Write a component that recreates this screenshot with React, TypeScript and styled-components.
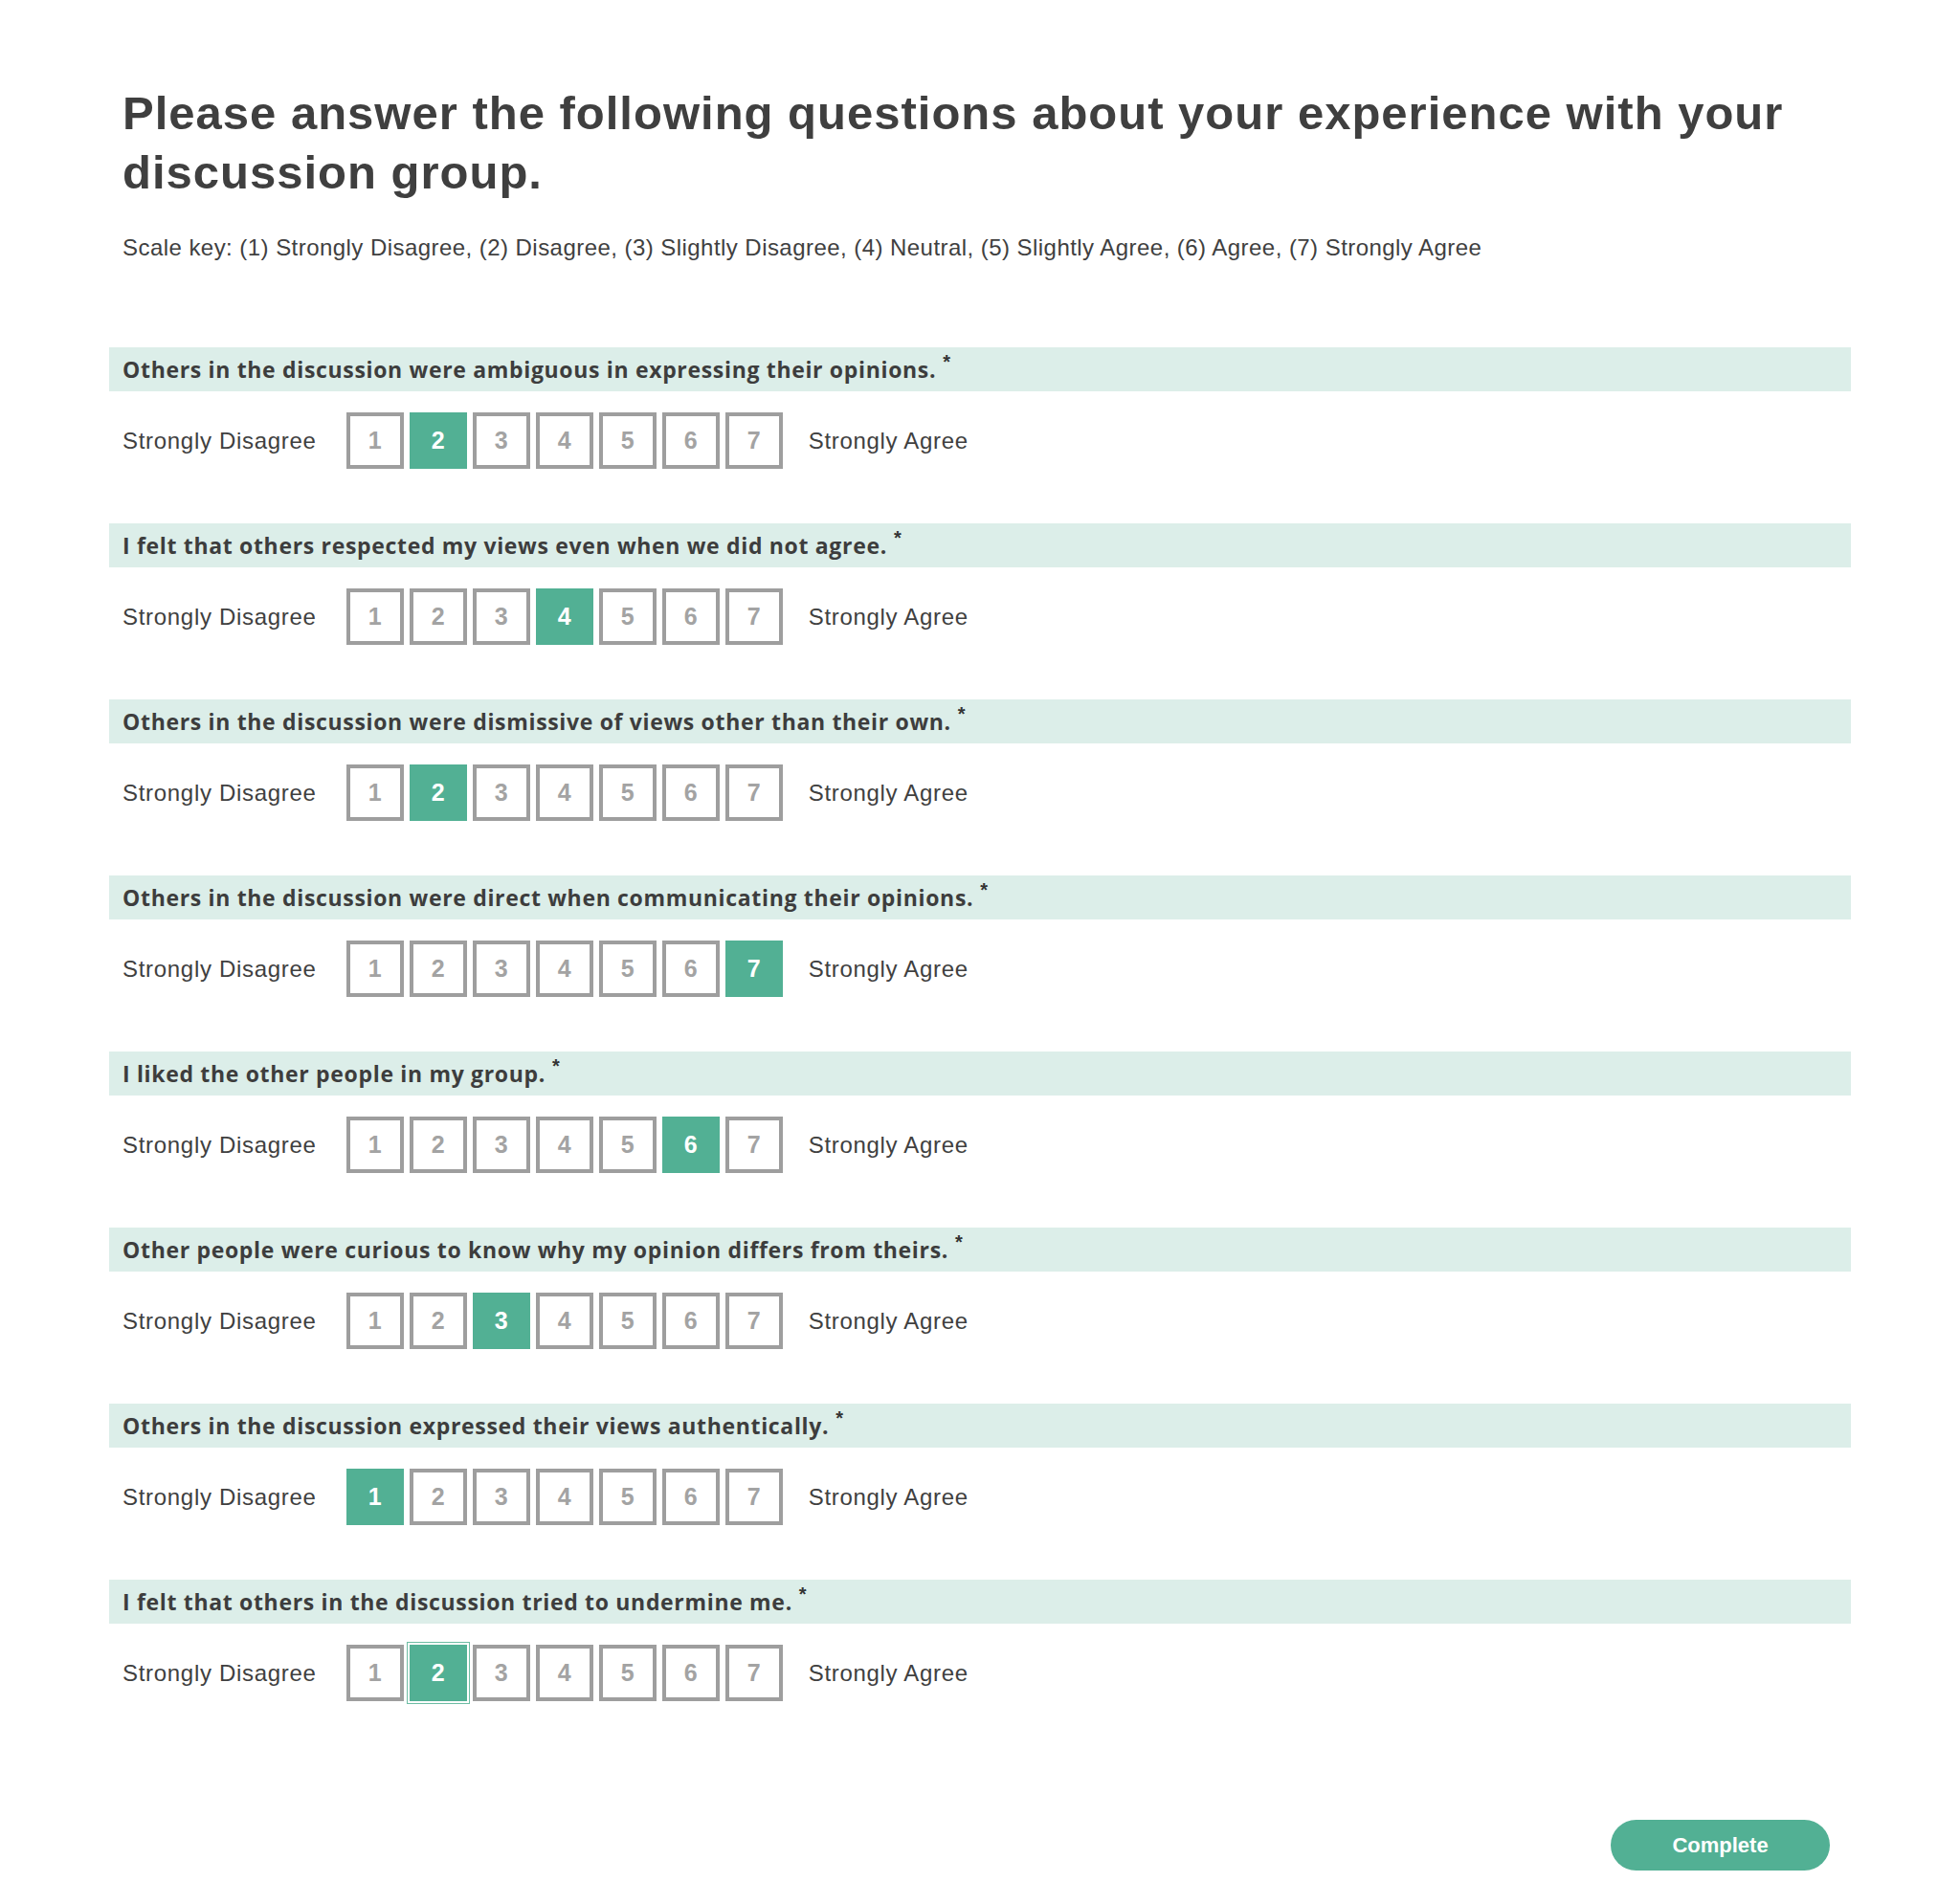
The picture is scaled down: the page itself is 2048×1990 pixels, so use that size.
import React, {FC, useState} from 'react';
import styled, {createGlobalStyle} from "styled-components";

interface IQuestion {
    text: string
    value: number
}

const questions: IQuestion[] = [
    {text: 'Others in the discussion were ambiguous in expressing their opinions.', value: 2},
    {text: 'I felt that others respected my views even when we did not agree.', value: 4},
    {text: 'Others in the discussion were dismissive of views other than their own.', value: 2},
    {text: 'Others in the discussion were direct when communicating their opinions.', value: 7},
    {text: 'I liked the other people in my group.', value: 6},
    {text: 'Other people were curious to know why my opinion differs from theirs.', value: 3},
    {text: 'Others in the discussion expressed their views authentically.', value: 1},
    {text: 'I felt that others in the discussion tried to undermine me.', value: 2},
]

const scale = [1, 2, 3, 4, 5, 6, 7]

const App: FC = () => {

    const [answers, setAnswers] = useState<number[]>(questions.map(q => q.value))
    const focused = questions.length - 1

    const choose = (qi: number, v: number) => {
        setAnswers(prev => prev.map((a, i) => i === qi ? v : a))
    }

    return (
        <>
            <GlobalStyle/>
            <Page>
                <Title>Please answer the following questions about your experience with your discussion group.</Title>
                <ScaleKey>
                    Scale key: (1) Strongly Disagree, (2) Disagree, (3) Slightly Disagree, (4) Neutral, (5) Slightly
                    Agree, (6) Agree, (7) Strongly Agree
                </ScaleKey>
                <Questions>
                    {questions.map((q, qi) => (
                        <Question key={qi}>
                            <QuestionHeader>
                                {q.text}
                                <Required>*</Required>
                            </QuestionHeader>
                            <RatingRow>
                                <EndLabel>Strongly Disagree</EndLabel>
                                <Boxes>
                                    {scale.map(v => (
                                        <Box
                                            key={v}
                                            $selected={answers[qi] === v}
                                            $focused={qi === focused && answers[qi] === v}
                                            onClick={() => choose(qi, v)}
                                        >
                                            {v}
                                        </Box>
                                    ))}
                                </Boxes>
                                <EndLabel $right>Strongly Agree</EndLabel>
                            </RatingRow>
                        </Question>
                    ))}
                </Questions>
                <Footer>
                    <CompleteButton>Complete</CompleteButton>
                </Footer>
            </Page>
        </>
    );
};

const GlobalStyle = createGlobalStyle`
  body {
    margin: 0;
    background: #fff;
    color: #404040;
    font-family: "Liberation Sans", Arial, Helvetica, sans-serif;
  }
`

const Page = styled.div`
  width: 1820px;
  margin: 0 auto;
  padding-top: 87px;
  display: flex;
  flex-direction: column;
`

const Title = styled.h1`
  margin: 0;
  padding: 0 14px;
  font-size: 49px;
  line-height: 62px;
  letter-spacing: 1px;
  font-weight: 700;
  color: #3f3f3f;
`

const ScaleKey = styled.p`
  margin: 32px 0 0;
  padding: 0 14px;
  font-size: 24px;
  line-height: 32px;
  letter-spacing: 0.45px;
  color: #404040;
`

const Questions = styled.div`
  margin-top: 88px;
  display: flex;
  flex-direction: column;
  gap: 57px;
`

const Question = styled.div`
  display: flex;
  flex-direction: column;
  gap: 22px;
`

const QuestionHeader = styled.div`
  height: 46px;
  padding: 0 14px;
  display: flex;
  align-items: center;
  background-color: #dceee9;
  font-family: "Open Sans", Lato, sans-serif;
  font-weight: 700;
  font-size: 23px;
  letter-spacing: 0.67px;
  color: #3d3d3d;
`

const Required = styled.span`
  align-self: flex-start;
  margin: 4px 0 0 7px;
  font-family: "Liberation Sans", Arial, sans-serif;
  font-size: 20px;
  font-weight: 700;
  color: #333;
`

const RatingRow = styled.div`
  height: 59px;
  padding: 0 14px;
  display: flex;
  align-items: center;
`

const EndLabel = styled.span<{ $right?: boolean }>`
  font-size: 24px;
  letter-spacing: 0.7px;
  color: #404040;
  margin: ${p => p.$right ? '0 0 0 27px' : '0 31px 0 0'};
`

const Boxes = styled.div`
  display: flex;
  gap: 6px;
`

const Box = styled.button<{ $selected: boolean, $focused: boolean }>`
  width: 60px;
  height: 59px;
  padding: 0;
  display: flex;
  justify-content: center;
  align-items: center;
  box-sizing: border-box;
  border: 4px solid ${p => p.$selected ? '#52b094' : '#9e9e9e'};
  background-color: ${p => p.$selected ? '#52b094' : '#fff'};
  color: ${p => p.$selected ? '#fff' : '#a3a3a3'};
  font-family: "Liberation Sans", Arial, Helvetica, sans-serif;
  font-weight: 700;
  font-size: 25px;
  cursor: pointer;
  outline: none;
  box-shadow: ${p => p.$focused ? '0 0 0 2px #fff, 0 0 0 3px #6dbda3' : 'none'};
`

const Footer = styled.div`
  margin-top: 124px;
  padding-right: 22px;
  display: flex;
  justify-content: flex-end;
`

const CompleteButton = styled.button`
  width: 229px;
  height: 53px;
  border: none;
  border-radius: 27px;
  background-color: #52b094;
  color: #fff;
  font-family: "Liberation Sans", Arial, Helvetica, sans-serif;
  font-weight: 700;
  font-size: 22px;
  cursor: pointer;
`

export default App;
